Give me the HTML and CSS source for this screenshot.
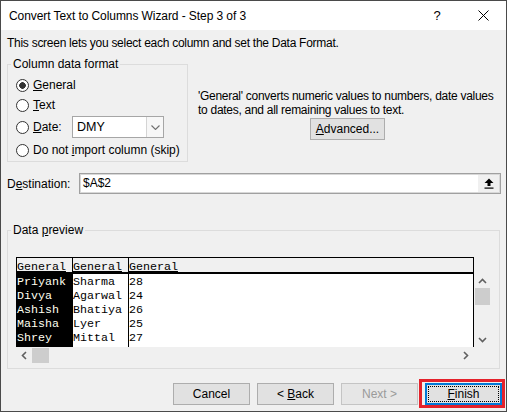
FILE: index.html
```html
<!DOCTYPE html>
<html>
<head>
<meta charset="utf-8">
<title>Convert Text to Columns Wizard - Step 3 of 3</title>
<link rel="stylesheet" href="styles.css">
</head>
<body>
<div class="window">
  <div class="titlebar">
    <span class="title">Convert Text to Columns Wizard - Step 3 of 3</span>
    <span class="tb-btn tb-help">?</span>
    <span class="tb-btn tb-close"><svg width="11" height="11" viewBox="0 0 11 11"><path d="M0.5 0.5L10.5 10.5M10.5 0.5L0.5 10.5" stroke="#000" stroke-width="1" fill="none"/></svg></span>
  </div>
  <div class="body">
    <p class="intro">This screen lets you select each column and set the Data Format.</p>
    <div class="top-row">
      <fieldset class="group format">
        <legend>Column data format</legend>
        <div class="radio-row r1"><span class="radio checked"></span><span class="lbl"><u>G</u>eneral</span></div>
        <div class="radio-row r2"><span class="radio"></span><span class="lbl"><u>T</u>ext</span></div>
        <div class="radio-row r3"><span class="radio"></span><span class="lbl date-lbl"><u>D</u>ate:</span>
          <span class="combo"><span class="combo-text">DMY</span><span class="combo-arrow"><svg width="9" height="5" viewBox="0 0 9 5"><path d="M0.5 0.5L4.5 4.5L8.5 0.5" stroke="#707070" stroke-width="1.1" fill="none"/></svg></span></span>
        </div>
        <div class="radio-row r4"><span class="radio"></span><span class="lbl">Do not <u>i</u>mport column (skip)</span></div>
      </fieldset>
      <div class="info">
        <p class="info-text">'General' converts numeric values to numbers, date values<br>to dates, and all remaining values to text.</p>
        <button class="btn advanced"><u>A</u>dvanced...</button>
      </div>
    </div>
    <div class="dest-row">
      <span class="dest-lbl">D<u>e</u>stination:</span>
      <span class="dest-input"><span class="dest-text">$A$2</span><span class="dest-btn"><svg width="10" height="11" viewBox="0 0 10 11"><path d="M5 0.5L9.5 5H6.5V8H3.5V5H0.5Z" fill="#000"/><rect x="0.5" y="9.5" width="9" height="1.2" fill="#000"/></svg></span></span>
    </div>
    <fieldset class="group preview-group">
      <legend>Data <u>p</u>review</legend>
      <div class="preview">
        <div class="pv-data">
          <div class="pv-col c1">
            <div class="pv-head"><u>General</u></div>
            <div class="pv-body">
              <div class="pv-cell">Priyank</div>
              <div class="pv-cell">Divya</div>
              <div class="pv-cell">Ashish</div>
              <div class="pv-cell">Maisha</div>
              <div class="pv-cell">Shrey</div>
            </div>
          </div>
          <div class="pv-col c2">
            <div class="pv-head"><u>General</u></div>
            <div class="pv-body">
              <div class="pv-cell">Sharma</div>
              <div class="pv-cell">Agarwal</div>
              <div class="pv-cell">Bhatiya</div>
              <div class="pv-cell">Lyer</div>
              <div class="pv-cell">Mittal</div>
            </div>
          </div>
          <div class="pv-col c3">
            <div class="pv-head"><u>General</u></div>
            <div class="pv-body">
              <div class="pv-cell">28</div>
              <div class="pv-cell">24</div>
              <div class="pv-cell">26</div>
              <div class="pv-cell">25</div>
              <div class="pv-cell">27</div>
            </div>
          </div>
        </div>
        <div class="vscroll">
          <span class="sb-arrow"><svg width="9" height="6" viewBox="0 0 9 6"><path d="M1 5L4.5 1.5L8 5" stroke="#606060" stroke-width="1.6" fill="none"/></svg></span>
          <span class="sb-thumb-v"></span>
          <span class="sb-space"></span>
          <span class="sb-arrow"><svg width="9" height="6" viewBox="0 0 9 6"><path d="M1 1L4.5 4.5L8 1" stroke="#606060" stroke-width="1.6" fill="none"/></svg></span>
        </div>
        <div class="hscroll">
          <span class="sb-arrow-h"><svg width="6" height="9" viewBox="0 0 6 9"><path d="M5 1L1.5 4.5L5 8" stroke="#606060" stroke-width="1.6" fill="none"/></svg></span>
          <span class="sb-thumb-h"></span>
          <span class="sb-space"></span>
          <span class="sb-arrow-h"><svg width="6" height="9" viewBox="0 0 6 9"><path d="M1 1L4.5 4.5L1 8" stroke="#606060" stroke-width="1.6" fill="none"/></svg></span>
        </div>
        <div class="sb-corner"></div>
      </div>
    </fieldset>
    <div class="button-row">
      <button class="btn">Cancel</button>
      <button class="btn">&lt; <u>B</u>ack</button>
      <button class="btn disabled">Next &gt;</button>
      <span class="highlight"><button class="btn default"><u>F</u>inish</button></span>
    </div>
  </div>
</div>
</body>
</html>
```
FILE: styles.css
```css
* { box-sizing: border-box; }
html, body { margin: 0; padding: 0; }
body {
  background: #f0f0f0;
  font-family: "Liberation Sans", Arial, sans-serif;
  font-size: 12px;
  color: #000;
}
.window {
  width: 507px;
  height: 412px;
  border: 1px solid #4a4a4a;
  background: #f0f0f0;
  overflow: hidden;
  display: flex;
  flex-direction: column;
}
.titlebar {
  height: 29px;
  flex: none;
  background: #fff;
  display: flex;
  align-items: center;
}
.title { flex: 1; padding-left: 8px; font-size: 12px; letter-spacing: -0.08px; white-space: nowrap; }
.tb-btn {
  width: 46px;
  height: 29px;
  display: flex;
  align-items: center;
  justify-content: center;
}
.tb-help { font-size: 13px; }
.body { padding: 0 4px 0 6px; }
.intro { margin: 5px 0 6px; line-height: 16px; letter-spacing: -0.27px; white-space: nowrap; }
.top-row { display: flex; align-items: flex-start; }

.group {
  margin: 0;
  border: 1px solid #dcdcdc;
  padding: 0 0 0 3px;
  min-width: 0;
}
.group legend { padding: 0 2px; line-height: 14px; }
.format { width: 181px; padding-top: 4px; }
.radio-row { display: flex; align-items: center; padding-left: 5px; }
.r1, .r2 { height: 20px; }
.r3 { height: 24px; }
.r4 { height: 22px; }
.radio {
  width: 13px;
  height: 13px;
  flex: none;
  border: 1px solid #333;
  border-radius: 50%;
  background: #fff;
}
.radio.checked { background: radial-gradient(circle, #333 0 3px, #fff 3.6px); }
.lbl { margin-left: 4px; white-space: nowrap; }
.date-lbl { width: 39px; flex: none; }
.combo {
  width: 92px;
  height: 22px;
  border: 1px solid #a6a6a6;
  background: #fff;
  display: flex;
  align-items: stretch;
}
.combo-text { flex: 1; padding-left: 4px; line-height: 20px; font-size: 12.5px; }
.combo-arrow {
  width: 17px;
  border-left: 1px solid #d4d4d4;
  background: #f7f7f7;
  display: flex;
  align-items: center;
  justify-content: center;
}

.info { width: 299px; margin: 32px 0 0 10px; text-align: center; }
.info-text { margin: 0; line-height: 14px; text-align: left; letter-spacing: -0.28px; white-space: nowrap; }

.btn {
  font-family: inherit;
  font-size: 12px;
  color: #000;
  width: 77px;
  height: 22px;
  padding: 0;
  background: #e1e1e1;
  border: 1px solid #adadad;
  border-radius: 0;
}
.advanced { width: 75px; margin-top: 1px; }
.btn.disabled { color: #9a9a9a; border-color: #c4c4c4; background: #e6e6e6; }
.btn.default {
  border: 2px solid #0078d7;
  outline: 1px dotted #000;
  outline-offset: -4px;
}

.dest-row { display: flex; align-items: center; height: 21px; margin-top: 11px; }
.dest-lbl { width: 72px; flex: none; }
.dest-input {
  width: 422px;
  height: 21px;
  border: 1px solid #a0a0a0;
  box-shadow: inset 0 0 0 1px #d8d8d8;
  background: #fff;
  display: flex;
  align-items: stretch;
}
.dest-text { flex: 1; padding-left: 3px; line-height: 19px; }
.dest-btn {
  width: 21px;
  margin: 1px 1px 1px 0;
  background: #f0f0f0;
  display: flex;
  align-items: center;
  justify-content: center;
}

.preview-group { width: 493px; margin-top: 29px; padding: 20px 0 5px 3px; }
.preview {
  margin-left: 5px;
  width: 474px;
  height: 106px;
  display: grid;
  grid-template-columns: 458px 16px;
  grid-template-rows: 90px 16px;
}
.pv-data {
  border-top: 1px solid #000;
  border-right: 1px solid #000;
  background: #fff;
  display: flex;
  font-family: "Liberation Mono", "Courier New", monospace;
  font-size: 11.67px;
  overflow: hidden;
}
.pv-col { border-left: 1px solid #000; display: flex; flex-direction: column; }
.c1, .c2 { width: 56px; flex: none; }
.c3 { flex: 1; }
.pv-head {
  height: 16px;
  padding-top: 2px;
  line-height: 14px;
  background: #f0f0f0;
  border-bottom: 2px solid #000;
  white-space: nowrap;
  overflow: hidden;
}
.pv-body { flex: 1; padding-top: 1px; }
.c1 .pv-body { background: #000; color: #fffff0; }
.pv-cell { height: 14px; line-height: 14px; white-space: nowrap; }

.vscroll {
  background: #f0f0f0;
  display: flex;
  flex-direction: column;
  align-items: center;
  padding-top: 16px;
}
.sb-arrow { height: 15px; width: 16px; flex: none; display: flex; align-items: center; justify-content: center; }
.sb-thumb-v { width: 15px; height: 17px; flex: none; background: #cdcdcd; margin-left: 1px; }
.sb-space { flex: 1; }
.hscroll { background: #f0f0f0; display: flex; align-items: center; }
.sb-arrow-h { width: 16px; height: 16px; flex: none; display: flex; align-items: center; justify-content: center; }
.sb-thumb-h { width: 17px; height: 15px; flex: none; background: #cdcdcd; margin-top: 1px; }
.sb-corner { background: #f0f0f0; }

.button-row {
  display: flex;
  justify-content: flex-end;
  align-items: flex-start;
  gap: 7px;
  margin-top: 14px;
}
.highlight {
  display: flex;
  border: 3px solid #e4222b;
  padding: 1px 0 0 3px;
  margin: -4px -3px -3px -6px;
}
```
